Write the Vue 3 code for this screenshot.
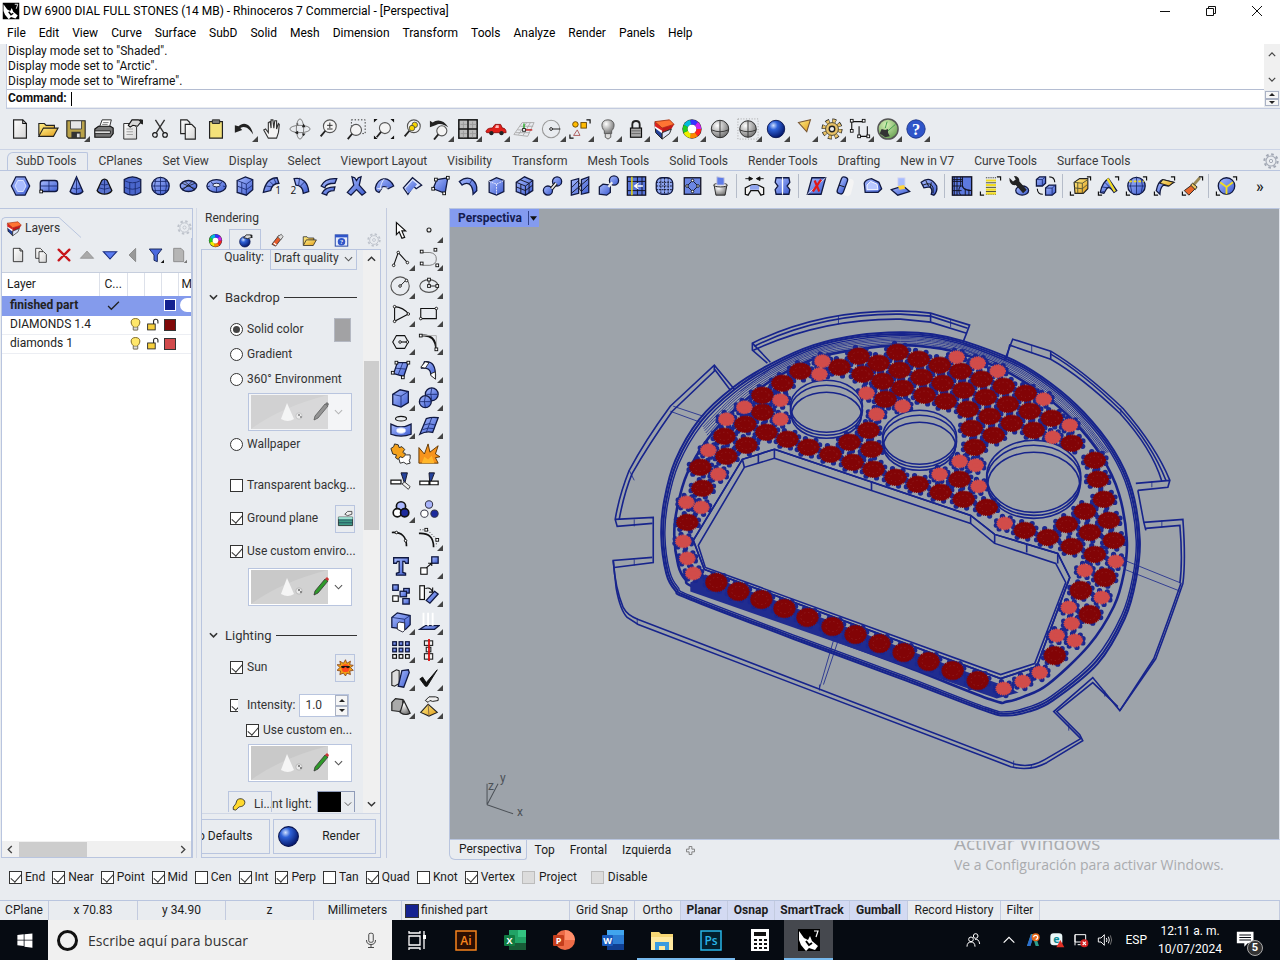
<template>
  <div class="app">
    <svg class="defs" width="0" height="0" aria-hidden="true">
      <defs>
        <linearGradient id="blue" x1="0" y1="0" x2="1" y2="1">
          <stop offset="0" stop-color="#a9bcff" /><stop offset="1" stop-color="#3c5bcf" />
        </linearGradient>
        <linearGradient id="paper" x1="0" y1="0" x2="1" y2="1">
          <stop offset="0" stop-color="#fff" /><stop offset="1" stop-color="#d4d4d4" />
        </linearGradient>
        <linearGradient id="gold" x1="0" y1="0" x2="1" y2="1">
          <stop offset="0" stop-color="#fff08a" /><stop offset="1" stop-color="#e09a18" />
        </linearGradient>
        <radialGradient id="ball" cx=".35" cy=".3" r=".7">
          <stop offset="0" stop-color="#cfe0ff" /><stop offset=".35" stop-color="#2f62d8" /><stop offset="1" stop-color="#061a6e" />
        </radialGradient>
        <radialGradient id="grey" cx=".35" cy=".3" r=".8">
          <stop offset="0" stop-color="#fff" /><stop offset="1" stop-color="#666" />
        </radialGradient>
        <radialGradient id="green" cx=".4" cy=".3" r=".8">
          <stop offset="0" stop-color="#d5f0b5" /><stop offset="1" stop-color="#5f9a4a" />
        </radialGradient>
      </defs>
    </svg>

    <header class="titlebar">
      <svg class="logo" viewBox="0 0 24 24" v-html="icons.rhino"></svg>
      <h1>DW 6900 DIAL FULL STONES (14 MB) - Rhinoceros 7 Commercial - [Perspectiva]</h1>
      <div class="window-buttons">
        <button aria-label="Minimize"><svg viewBox="0 0 12 12"><path d="M1 6.500h10" /></svg></button>
        <button aria-label="Restore"><svg viewBox="0 0 12 12"><path d="M1.500 3.500h7v7h-7zM3.500 3.500v-2h7v7h-2" /></svg></button>
        <button aria-label="Close"><svg viewBox="0 0 12 12"><path d="M1 1l10 10M11 1L1 11" /></svg></button>
      </div>
    </header>

    <nav class="menubar">
      <button v-for="m in menus" :key="m">{{ m }}</button>
    </nav>

    <section class="command">
      <div class="history">
        <p v-for="line in history" :key="line">{{ line }}</p>
      </div>
      <div class="history-scroll">
        <svg viewBox="0 0 10 6"><path d="M1 5l4-4 4 4" /></svg>
        <svg viewBox="0 0 10 6"><path d="M1 1l4 4 4-4" /></svg>
      </div>
      <div class="prompt">
        <label for="cmd">Command:</label>
        <span class="caret"></span>
        <input id="cmd" v-model="command" type="text">
      </div>
      <div class="spin">
        <button aria-label="Previous"><svg viewBox="0 0 8 4"><path d="M0 4l4-4 4 4z" /></svg></button>
        <button aria-label="Next"><svg viewBox="0 0 8 4"><path d="M0 0l4 4 4-4z" /></svg></button>
      </div>
    </section>

    <div class="toolbar">
      <button v-for="t in mainTools" :key="t.id" class="tool" :class="{ more: t.more }" :aria-label="t.id">
        <svg viewBox="0 0 24 24" v-html="icons[t.id]"></svg>
      </button>
    </div>

    <div class="tabs">
      <button v-for="(t, i) in tabs" :key="t" :class="{ active: i === activeTab }" @click="activeTab = i">{{ t }}</button>
      <svg class="gear" viewBox="0 0 24 24" v-html="icons.gear"></svg>
    </div>
    <div class="toolbar subd">
      <template v-for="(t, i) in subdTools" :key="i">
        <span v-if="t === '|'" class="sep"></span>
        <button v-else class="tool" :aria-label="t"><svg viewBox="0 0 24 24" v-html="icons[t]"></svg></button>
      </template>
      <button class="overflow">»</button>
    </div>

    <main class="workspace">
      <aside class="layers">
        <div class="panel-tab">
          <div class="panel-label">
            <svg viewBox="0 0 24 24" v-html="icons.layers"></svg>Layers
          </div>
          <svg class="slant" viewBox="0 0 22 21" preserveAspectRatio="none"><path d="M0 .5L22 20.500" /></svg>
          <svg class="gear" viewBox="0 0 24 24" v-html="icons.gear"></svg>
        </div>
        <div class="layer-frame">
          <div class="layer-tools">
            <button v-for="t in layerTools" :key="t" :aria-label="t"><svg viewBox="0 0 24 24" v-html="icons[t]"></svg></button>
          </div>
          <div class="layer-list">
            <table>
              <colgroup>
                <col class="c-name"><col class="c-cur"><col class="c-s"><col class="c-s"><col class="c-s"><col class="c-m">
              </colgroup>
              <thead>
                <tr><th>Layer</th><th>C...</th><th></th><th></th><th></th><th>M</th></tr>
              </thead>
              <tbody>
                <tr v-for="l in layers" :key="l.name" :class="{ current: l.current }">
                  <td>{{ l.name }}</td>
                  <td><svg v-if="l.current" viewBox="0 0 24 24" v-html="icons.tick"></svg></td>
                  <td><svg v-if="!l.current" viewBox="0 0 24 24" v-html="icons.bulbOn"></svg></td>
                  <td><svg v-if="!l.current" viewBox="0 0 24 24" v-html="icons.unlock"></svg></td>
                  <td><span class="swatch" :style="{ background: l.color }"></span></td>
                  <td><span v-if="l.current" class="material"></span></td>
                </tr>
              </tbody>
            </table>
          </div>
          <div class="hscroll">
            <svg viewBox="0 0 6 10"><path d="M5 1L1 5l4 4" /></svg>
            <span class="thumb"></span>
            <svg viewBox="0 0 6 10"><path d="M1 1l4 4-4 4" /></svg>
          </div>
        </div>
      </aside>

      <aside class="rendering">
        <h2>Rendering</h2>
        <div class="render-tabs">
          <button v-for="(t, i) in renderTabs" :key="t" :class="{ active: i === 1 }" :aria-label="t">
            <svg viewBox="0 0 24 24" v-html="icons[t]"></svg>
          </button>
          <svg class="gear" viewBox="0 0 24 24" v-html="icons.gear"></svg>
        </div>
        <div class="render-frame">
          <div class="render-scroll">
            <div class="render-body">
              <div class="quality">
                <label for="quality">Quality:</label>
                <span class="select">
                  <select id="quality"><option>Draft quality</option></select>
                  <svg class="chev" viewBox="0 0 10 6"><path d="M1 1l4 4 4-4" /></svg>
                </span>
              </div>
              <h3><svg viewBox="0 0 10 6"><path d="M1 1l4 4 4-4" /></svg>Backdrop<i></i></h3>
              <div class="field">
                <label><input v-model="backdrop" type="radio" value="solid">Solid color</label>
                <span class="solid-swatch"></span>
              </div>
              <div class="field"><label><input v-model="backdrop" type="radio" value="gradient">Gradient</label></div>
              <div class="field"><label><input v-model="backdrop" type="radio" value="env">360° Environment</label></div>
              <button class="env off" aria-label="360 environment">
                <svg class="scene" viewBox="0 0 77 34" v-html="icons.scene"></svg>
                <svg class="chev" viewBox="0 0 10 6"><path d="M1 1l4 4 4-4" /></svg>
              </button>
              <div class="field"><label><input v-model="backdrop" type="radio" value="wallpaper">Wallpaper</label></div>
              <div class="field spaced-2"><label><input type="checkbox">Transparent backg...</label></div>
              <div class="field spaced">
                <label><input type="checkbox" checked>Ground plane</label>
                <button class="mini" aria-label="Ground plane settings"><svg viewBox="0 0 24 24" v-html="icons.ground"></svg></button>
              </div>
              <div class="field spaced"><label><input type="checkbox" checked>Use custom enviro...</label></div>
              <button class="env reflect" aria-label="Reflection environment">
                <svg class="scene" viewBox="0 0 77 34" v-html="icons.scene"></svg>
                <svg class="chev" viewBox="0 0 10 6"><path d="M1 1l4 4 4-4" /></svg>
              </button>
              <h3><svg viewBox="0 0 10 6"><path d="M1 1l4 4 4-4" /></svg>Lighting<i></i></h3>
              <div class="field">
                <label><input type="checkbox" checked>Sun</label>
                <button class="mini" aria-label="Sun settings"><svg viewBox="0 0 24 24" v-html="icons.sun"></svg></button>
              </div>
              <div class="field intensity">
                <input class="cut" type="checkbox" checked aria-label="Skylight">
                <label for="intensity">Intensity:</label>
                <span class="number">
                  <input id="intensity" type="text" value="1.0">
                  <span class="steps">
                    <button aria-label="Up"><svg viewBox="0 0 8 4"><path d="M0 4l4-4 4 4z" /></svg></button>
                    <button aria-label="Down"><svg viewBox="0 0 8 4"><path d="M0 0l4 4 4-4z" /></svg></button>
                  </span>
                </span>
              </div>
              <div class="field indent"><label><input type="checkbox" checked>Use custom en...</label></div>
              <button class="env" aria-label="Skylight environment">
                <svg class="scene" viewBox="0 0 77 34" v-html="icons.scene"></svg>
                <svg class="chev" viewBox="0 0 10 6"><path d="M1 1l4 4 4-4" /></svg>
              </button>
              <div class="ambient">
                <button class="lights"><svg viewBox="0 0 24 24" v-html="icons.bulbTilt"></svg>Li...</button>
                <span>nt light:</span>
                <button class="black" aria-label="Ambient color"><i></i><svg class="chev" viewBox="0 0 10 6"><path d="M1 1l4 4 4-4" /></svg></button>
              </div>
            </div>
            <div class="vscroll">
              <svg viewBox="0 0 10 6"><path d="M1 5l4-4 4 4" /></svg>
              <span class="thumb"></span>
              <svg viewBox="0 0 10 6"><path d="M1 1l4 4 4-4" /></svg>
            </div>
          </div>
          <div class="render-foot">
            <button class="defaults"><span>o Defaults</span></button>
            <button class="go"><svg viewBox="0 0 24 24" v-html="icons.ball"></svg><span>Render</span></button>
          </div>
        </div>
      </aside>

      <aside class="toolbox">
        <button v-for="t in sideTools" :key="t.id" class="tool" :class="{ more: t.more }" :aria-label="t.id">
          <svg viewBox="0 0 24 24" v-html="icons[t.id]"></svg>
        </button>
      </aside>

      <section class="view">
        <div class="canvas">
          <svg class="model" viewBox="450 209 828 630" preserveAspectRatio="xMinYMin slice">
            <g class="wire">
              <path v-for="(d, i) in flange" :key="'f' + i" :d="d" />
            </g>
            <g class="wire thin">
              <path v-for="(d, i) in seams" :key="'s' + i" :d="d" />
              <path v-for="(d, i) in arcs" :key="'a' + i" :d="d" />
            </g>
            <g class="wire">
              <path v-for="r in rings" :key="r.t" :d="r.d" :stroke-width="r.w" />
              <path class="pad" d="M690 582L705 574L1000 684L1018 692L996 698L690 591Z" />
              <path class="glass" d="M774 449L970 515L994 534L1057 553L1069 577L1036 666L1000 678L704 569L693 540L742 459Z" />
              <path v-for="(d, i) in screen" :key="'w' + i" :d="d" />
            </g>
            <g class="prongs">
              <template v-for="(g, i) in gems" :key="'p' + i">
                <circle v-for="(p, j) in g.prongs" :key="j" :cx="p[0]" :cy="p[1]" r="2.600" />
              </template>
            </g>
            <g v-for="(h, i) in holes" :key="'h' + i" class="hole">
              <ellipse :cx="h[0]" :cy="h[1] - 9" :rx="h[2] + 1" :ry="h[3] + 3" />
              <ellipse class="line" :cx="h[0]" :cy="h[1] - 5" :rx="h[2] + 1" :ry="h[3] + 2" />
              <ellipse class="line" :cx="h[0]" :cy="h[1]" :rx="h[2]" :ry="h[3]" />
            </g>
            <g v-for="(g, i) in gems" :key="'g' + i" :class="g.kind">
              <ellipse :cx="g.x" :cy="g.y" :rx="g.rx" :ry="g.ry" />
              <ellipse class="facet" :cx="g.x" :cy="g.y" :rx="g.rx - 4" :ry="g.ry - 4" />
            </g>
            <g class="axes">
              <path d="M487 804L513 813M487 804V783M487 804L498 783" />
              <text x="517" y="815">x</text><text x="500" y="781">y</text><text x="488" y="789">z</text>
            </g>
          </svg>
          <button class="view-name">Perspectiva<i><svg viewBox="0 0 8 5"><path d="M0 0l4 5 4-5z" /></svg></i></button>
        </div>
        <div class="view-tabs">
          <button v-for="(v, i) in views" :key="v" :class="{ active: i === 0 }">{{ v }}</button>
          <button aria-label="New view"><svg viewBox="0 0 10 10"><path d="M3.500 .5h3v3h3v3h-3v3h-3v-3h-3v-3h3z" /></svg></button>
        </div>
      </section>
    </main>

    <div class="osnap">
      <label v-for="o in osnaps" :key="o.name" :class="{ wide: o.disabled }">
        <input type="checkbox" :checked="o.on" :disabled="o.disabled">{{ o.name }}
      </label>
    </div>

    <div class="status">
      <span v-for="s in readouts" :key="s">{{ s }}</span>
      <span class="layer-name"><i></i>finished part</span>
      <button v-for="t in toggles" :key="t.name" :class="{ on: t.on }">{{ t.name }}</button>
      <span class="rest"></span>
    </div>

    <footer class="taskbar">
      <button class="start" aria-label="Inicio"><svg viewBox="0 0 24 24" v-html="icons.windows"></svg></button>
      <div class="search">
        <span class="cortana"></span>
        <input type="text" aria-label="Buscar" placeholder="Escribe aquí para buscar">
        <svg viewBox="0 0 24 24" v-html="icons.mic"></svg>
      </div>
      <button v-for="a in apps" :key="a.id" class="app-button" :class="{ open: a.open, active: a.active }" :aria-label="a.id">
        <svg viewBox="0 0 24 24" v-html="icons[a.id]"></svg>
      </button>
      <div class="tray">
        <svg class="people" viewBox="0 0 24 24" v-html="icons.people"></svg>
        <svg v-for="t in tray" :key="t" viewBox="0 0 24 24" v-html="icons[t]"></svg>
        <span class="lang">ESP</span>
        <div class="clock"><span>12:11 a. m.</span><span>10/07/2024</span></div>
        <div class="notes"><svg viewBox="0 0 24 24" v-html="icons.note"></svg><b>5</b></div>
      </div>
    </footer>

    <div class="watermark">
      <p>Activar Windows</p>
      <p>Ve a Configuración para activar Windows.</p>
    </div>
  </div>
</template>

<script setup>
import { ref } from 'vue'

const command = ref('')
const activeTab = ref(0)
const backdrop = ref('solid')

const menus = ['File', 'Edit', 'View', 'Curve', 'Surface', 'SubD', 'Solid', 'Mesh', 'Dimension', 'Transform', 'Tools', 'Analyze', 'Render', 'Panels', 'Help']
const history = ['Display mode set to "Shaded".', 'Display mode set to "Arctic".', 'Display mode set to "Wireframe".']
const tabs = ['SubD Tools', 'CPlanes', 'Set View', 'Display', 'Select', 'Viewport Layout', 'Visibility', 'Transform', 'Mesh Tools', 'Solid Tools', 'Render Tools', 'Drafting', 'New in V7', 'Curve Tools', 'Surface Tools']
const views = ['Perspectiva', 'Top', 'Frontal', 'Izquierda']

// a trailing + marks a tool with a flyout
const tools = (list) => list.split(' ').map((s) => ({ id: s.replace('+', ''), more: s.endsWith('+') }))

const mainTools = tools('new open save+ print props cut copy paste undo+ pan rotate zoom zoomWin zoomExt zoomSel zoomBack+ fourView+ car+ grid+ target+ selectSet+ bulb+ lock+ layers+ wheel+ shade ghost+ ball+ spot+ cog+ dims+ grass+ help+')
const sideTools = tools('arrow point+ polyline+ curve+ circle+ ellipse+ arc+ rect+ polygon+ fillet+ srfPts+ srfBend+ box+ spheres+ pipe+ patch+ puzzle burst trim split group+ ungroup editPts ctrlPts+ text move+ copyObj rotateObj+ boolean+ project+ array+ align+ shear+ check+ solids+ pyramid+')
const subdTools = 'hex plane cone coneCut cyl sphere disc torus box2 loft1 loft2 sweep tri bend bend2 quad strip cube cubeGrid join bridge joinBox insert gridBall diamond bin | stitch mirror | crease pill slab extrude offset | corner lines wrench swap | boxY bendY ballY srfY brush | cubeSel'.split(' ')
const layerTools = ['new', 'copy', 'delete', 'upOff', 'down', 'leftOff', 'filter', 'sheetOff']
const renderTabs = ['wheel', 'renderBall', 'tube', 'open', 'helpWin']
const layers = [
  { name: 'finished part', color: '#152290', current: true },
  { name: 'DIAMONDS 1.4', color: '#800808' },
  { name: 'diamonds 1', color: '#d14a4c' },
]
const osnaps = [
  { name: 'End', on: true }, { name: 'Near', on: true }, { name: 'Point', on: true }, { name: 'Mid', on: true },
  { name: 'Cen' }, { name: 'Int', on: true }, { name: 'Perp', on: true }, { name: 'Tan' }, { name: 'Quad', on: true },
  { name: 'Knot' }, { name: 'Vertex', on: true }, { name: 'Project', disabled: true }, { name: 'Disable', disabled: true },
]
const readouts = ['CPlane', 'x 70.83', 'y 34.90', 'z', 'Millimeters']
const toggles = [
  { name: 'Grid Snap' }, { name: 'Ortho' }, { name: 'Planar', on: true }, { name: 'Osnap', on: true },
  { name: 'SmartTrack', on: true }, { name: 'Gumball', on: true }, { name: 'Record History' }, { name: 'Filter' },
]
const apps = [
  { id: 'taskview' }, { id: 'illustrator' }, { id: 'excel' }, { id: 'powerpoint' }, { id: 'word' },
  { id: 'explorer', open: true }, { id: 'photoshop', open: true }, { id: 'calc' }, { id: 'rhino', open: true, active: true },
]
const tray = ['chevUp', 'autodesk', 'eset', 'network', 'volume']

// ---- icons, all on a 24 unit grid ----
const k = 'fill="none" stroke="#111" stroke-width="1.2"'
const b = 'fill="url(#blue)" stroke="#101840" stroke-width="1.4"'
const y = 'fill="url(#gold)" stroke="#222" stroke-width="1.2"'
const n = 'fill="none" stroke="#17286f" stroke-width=".9"'
const dot = (...pts) => pts.map(([px, py]) => `<rect x="${px - 1.5}" y="${py - 1.5}" width="3" height="3" fill="#fff" stroke="#111"/>`).join('')
const ends = (...pts) => pts.map(([px, py]) => `<circle cx="${px}" cy="${py}" r="1.4" fill="#fff" stroke="#111"/>`).join('')
const hues = ['#f22', '#f80', '#ee0', '#2c2', '#0bd', '#33f', '#c2e']
const wheel = '<circle cx="12" cy="12" r="10.600" fill="#333"/><circle cx="12" cy="12" r="5" fill="#fff"/>' + hues.map((c, i) => `<circle cx="12" cy="12" r="7.500" fill="none" stroke="${c}" stroke-width="5" stroke-dasharray="6.9 40.3" stroke-dashoffset="${-i * 6.73}"/>`).join('')
const lens = (cx, cy, r) => `<circle cx="${cx}" cy="${cy}" r="${r}" fill="#f4f4f4" stroke="#555" stroke-width="1.2"/><path d="M${cx - r * 0.7} ${cy + r * 0.7}L${cx - r - 3} ${cy + r + 4}" stroke="#222" stroke-width="2"/>`
const corners = '<path d="M19 2h4v4M5 22H1v-4" fill="none" stroke="#111" stroke-width="1.3"/>'
const office = (color, letter, shape) => `${shape}<rect x="1" y="7" width="11" height="11" rx="1" fill="${color}"/><text x="6.500" y="16" text-anchor="middle" font-size="9" font-weight="700" fill="#fff" font-family="Open Sans, sans-serif">${letter}</text>`
const cubeAt = (x0, y0, s) => `<path d="M${x0} ${y0 + s * 0.3}l${s * 0.35} -${s * 0.3}h${s * 0.65}v${s * 0.7}l-${s * 0.35} ${s * 0.3}h-${s * 0.65}z" ${b}/><path d="M${x0} ${y0 + s * 0.3}h${s * 0.65}v${s * 0.7}m0-${s * 0.7}l${s * 0.35}-${s * 0.3}" ${n}/>`

const icons = {
  rhino: '<rect x="1" y="1" width="22" height="22" fill="#000"/><path d="M2 3l5 7 4 2 2-4 2 5 6 5-3 4-6-2-3 3-5-6-2-5z" fill="#fff"/><path d="M9 13l3 4 3-2" stroke="#000" fill="none" stroke-width="2"/><path d="M17 3h4l-2 6" fill="none" stroke="#fff" stroke-width="1.2"/>',
  gear: '<g fill="none" stroke="#a2a8b4"><circle cx="12" cy="12" r="7.500" stroke-width="1.6"/><circle cx="12" cy="12" r="10" stroke-width="3" stroke-dasharray="3.9 3.95"/><circle cx="12" cy="12" r="2.500" stroke-width="1.4"/></g>',
  new: `<path d="M5 2h10l4 4v16H5z" fill="url(#paper)" stroke="#222" stroke-width="1.3"/><path d="M15 2v4h4" ${k}/>`,
  copy: '<path d="M4 2h7l3 3v12H4z" fill="url(#paper)" stroke="#222" stroke-width="1.2"/><path d="M9 7h7l4 4v12H9z" fill="url(#paper)" stroke="#222" stroke-width="1.2"/>',
  open: `<path d="M2 19V6h6l2 2h9v4" ${y}/><path d="M2 20l5-9h16l-5 9z" ${y}/>`,
  save: '<path d="M2 3h20v19H4l-2-2z" fill="#b9a24a" stroke="#222" stroke-width="1.2"/><path d="M6 3h12v9H6z" fill="#e6e6e6" stroke="#444"/><path d="M7 15h10v7H7z" fill="#333"/><path d="M13 17h3v4h-3z" fill="#ddd"/>',
  print: '<path d="M7 10l3-8h10l-2 8z" fill="#fff" stroke="#222"/><path d="M2 12l4-3h13l3 2v6l-3 4H2z" fill="#777" stroke="#111" stroke-width="1.3"/><path d="M2 14h17v3H2z" fill="#ddd" stroke="#222"/><path d="M11 5h6M10 7h6" stroke="#777"/>',
  props: `<path d="M3 6h10l4 4v13H3z" fill="url(#paper)" stroke="#222"/><path d="M6 12h7M6 15h7M6 18h7" stroke="#999"/><path d="M8 8l4-6h7l3 2-4 5-5-1-3 2z" fill="#d8d8d8" stroke="#111" stroke-width="1.2"/><path d="M20 1l4 1v5l-3-1z" fill="#222"/>`,
  cut: `<path d="M7 2l9 14M17 2L8 16" stroke="#333" stroke-width="1.500"/><circle cx="6.500" cy="18.500" r="2.500" ${k}/><circle cx="17.500" cy="18.500" r="2.500" ${k}/>`,
  paste: '<path d="M5 4h14v18H5z" fill="#f4e27a" stroke="#222" stroke-width="1.300"/><path d="M8 2h8v4H8z" fill="#777" stroke="#222"/>',
  undo: '<path d="M2 8v8l8-3-2-2c5-3 9 0 14 7-2-11-10-15-16-9z" fill="#222"/>',
  pan: '<path d="M8 22l-5-9 2-1 3 4V5l2-1 1 7V2h2l1 9 1-8h2l0 9 2-6 1 1-1 9-2 6z" fill="#f3f3f3" stroke="#333" stroke-width="1.200"/>',
  rotate: '<ellipse cx="12" cy="12" rx="11" ry="4" fill="none" stroke="#777"/><ellipse cx="12" cy="12" rx="4" ry="11" fill="none" stroke="#777"/><path d="M14 10l2-4 2 4zM14 17l2 3 2-3zM10 14l-4 2 4 2zM8 6h2v2zM12 7v4" fill="#222"/>',
  zoom: lens(14, 9, 7) + '<path d="M11 8h6M14 5v6M11 12h6" stroke="#222"/>',
  zoomWin: '<rect x="7" y="2" width="15" height="15" fill="none" stroke="#222" stroke-dasharray="1.500 2"/>' + lens(12, 13, 6),
  zoomExt: lens(13, 11, 6) + '<path d="M1 5V1h4zM19 1h4v4zM1 19v4h4zM23 19v4h-4z" fill="#111"/>',
  zoomSel: lens(14, 9, 7) + '<circle cx="15" cy="7.500" r="3" fill="#f6d400" stroke="#554"/><circle cx="12" cy="11" r="3" fill="#f6d400" stroke="#554"/>',
  zoomBack: lens(14, 14, 5.5) + '<path d="M1 3v7l6-2c5-3 9-1 14 2C16 2 9 1 4 5z" fill="#222"/>',
  fourView: '<rect x="2" y="2" width="20" height="20" fill="#bbb" stroke="#111" stroke-width="1.600"/><path d="M4 7h7M14 7h7M4 17h7M14 17h7M7 4v7M17 4v7M7 14v7M17 14v7" stroke="#999"/><path d="M12 2v20M2 12h20" stroke="#111" stroke-width="1.600"/>',
  car: '<path d="M1 15c1-4 5-4 7-4l3-4h6l2 4c3 0 4 2 4 5H2z" fill="#e0201a" stroke="#901010"/><circle cx="7" cy="16.500" r="2.300" fill="#222"/><circle cx="18" cy="16.500" r="2.300" fill="#222"/><path d="M12 8h3v3h-4z" fill="#fbb"/>',
  grid: '<path d="M1 18L10 5h13L16 20zM5 13h15M3 16h15M8 9h14M6 18l9-13M11 19l8-14" fill="none" stroke="#aaa"/><path d="M12 13h9" stroke="#c22" stroke-width="1.500"/><path d="M12 13V6" stroke="#2a2" stroke-width="1.500"/><rect x="10.500" y="11.500" width="3" height="3" fill="#fff" stroke="#222"/>',
  target: '<circle cx="11" cy="12" r="9.500" fill="none" stroke="#999" stroke-width="1.200"/><path d="M12 12h9" stroke="#111"/><circle cx="11" cy="12" r="1.500" fill="#fff" stroke="#111"/>',
  selectSet: '<circle cx="7" cy="7" r="3" fill="#fb0" stroke="#640"/><rect x="13" y="5" width="6" height="6" fill="#fb0" stroke="#640"/><path d="M5 19l4-6 3 6z" fill="none" stroke="#a55"/>' + corners,
  bulb: '<path d="M12 2c-8 0-8 8-4 12v3h8v-3c4-4 4-12-4-12z" fill="url(#grey)" stroke="#555"/><path d="M9 17h6v4l-3 2-3-2z" fill="#ddd" stroke="#555"/>',
  lock: '<path d="M8 11V7c0-5 8-5 8 0v4" fill="none" stroke="#222" stroke-width="2"/><rect x="6" y="11" width="12" height="10" fill="#aaa" stroke="#111" stroke-width="1.300"/><path d="M7 14h10M7 17h10" stroke="#666"/>',
  layers: '<path d="M2 5l8 5v13l-7-7z" fill="#25429c" stroke="#111"/><path d="M2 5l8 5v7L2 11z" fill="#fff"/><path d="M2 4l8 5v5L2 9z" fill="#d22"/><path d="M2 4l16-2 5 5-13 4z" fill="#ff7433" stroke="#a31"/><path d="M10 11l13-4-3 5-10 4z" fill="#c31a18"/><path d="M10 16l10-4-2 5-8 6z" fill="#dfe6f8" stroke="#222"/>',
  wheel,
  shade: '<circle cx="12" cy="12" r="9.500" fill="url(#grey)" stroke="#222"/><path d="M12 3v18M3 13q9 4 18 0" fill="none" stroke="#333"/>',
  ghost: '<rect x="1" y="1" width="22" height="22" fill="none" stroke="#999" stroke-dasharray="1 2"/><circle cx="12" cy="12" r="9" fill="url(#grey)" stroke="#222"/><path d="M12 3v18M3 13q9 4 18 0" fill="none" stroke="#333"/>',
  ball: '<circle cx="12" cy="12" r="9.500" fill="url(#ball)" stroke="#0a154f"/>',
  spot: '<path d="M6 5l13-3-4 13z" fill="url(#gold)" stroke="#753" stroke-width="1.200"/>',
  cog: '<circle cx="12" cy="12" r="8.500" fill="none" stroke="#222" stroke-width="6" stroke-dasharray="3.800 2.880"/><circle cx="12" cy="12" r="8.500" fill="none" stroke="#e8c267" stroke-width="4.200" stroke-dasharray="3 3.680" stroke-dashoffset="-.4"/><circle cx="12" cy="12" r="7" fill="#e8c267" stroke="#443"/><circle cx="12" cy="12" r="3" fill="#eee" stroke="#222" stroke-width="1.500"/>',
  dims: `<path d="M3 4h13M3 4v10M11 20h9M20 9v11M11 9v11" ${k}/>` + dot([3, 3], [16, 3], [11, 20], [3, 14], [21, 20]),
  grass: '<circle cx="12" cy="12" r="11" fill="url(#green)" stroke="#555" stroke-width="1.600"/><path d="M12 14l8-7M9 11l2-7" stroke="#394"/><path d="M3 17l2-5 4 1 3-1v4l2 4-5 1z" fill="#333"/>',
  help: '<circle cx="12" cy="12" r="10" fill="#2f55c9" stroke="#1b3488"/><text x="12" y="18" text-anchor="middle" font-size="18" font-weight="700" fill="#fff" font-family="Liberation Serif, serif">?</text>',

  hex: `<path d="M7 2h10l5 10-5 10H7L2 12z" ${b}/><path d="M9 6h6l3 6-3 6H9l-3-6z" fill="#a9bcff" stroke="#dfe8ff"/>`,
  plane: `<rect x="3" y="6" width="19" height="12" rx="3" ${b}/><path d="M12.500 6v12M3 12h19" ${n}/>` + dot([4, 18]),
  cone: `<path d="M12 2l7 16c-3 4-11 4-14 0z" ${b}/><path d="M12 2v19M7 14q5 3 10 0" ${n}/>`,
  coneCut: `<path d="M9 6q3-3 6 0l5 11c-3 5-13 5-16 0z" fill="#5b74cf" stroke="#111" stroke-width="1.400"/><path d="M12 5v16M6 14q6 3 12 0M8 10q4 2 8 0" ${n}/>`,
  cyl: `<path d="M3 5q9-6 18 0v14q-9 6-18 0z" fill="#4a66cc" stroke="#101840" stroke-width="1.400"/><path d="M3 6q9 5 18 0M3 13q9 5 18 0M9 8v14M15 8v14" ${n}/>`,
  sphere: `<circle cx="12" cy="12" r="9.500" ${b}/><path d="M12 2v20M3 12h18M5 7h14M5 17h14M7 4q-3 8 0 16M17 4q3 8 0 16" ${n}/>`,
  disc: `<ellipse cx="12" cy="12" rx="9" ry="6" ${b}/><path d="M5 9l14 6M5 15l14-6M8 7l10 9M6 16L16 7" stroke="#111" stroke-width=".8"/>`,
  torus: `<ellipse cx="12" cy="12" rx="10.500" ry="7" ${b}/><ellipse cx="12" cy="11" rx="4" ry="2" fill="#e9ecf1" stroke="#101840"/><path d="M12 13v6M5 12l-3 1M19 12l3 1M6 8l3 2M18 8l-3 2" ${n}/>`,
  box2: `<path d="M4 6l9-4 8 3v11l-7 6-10-3z" ${b}/><path d="M4 6l10 4 7-5M14 10v12M9 8v12M4 12l10 4 7-5" ${n}/>`,
  loft1: `<path d="M2 19C4 9 9 3 17 3l2 6c-5 0-8 3-9 8z" ${b}/><path d="M5 12l7 1M9 7l4 4M13 3l3 6" ${n}/><text x="15" y="21" font-size="11" fill="#111" font-family="Open Sans, sans-serif">1</text>`,
  loft2: `<path d="M5 4c9-2 15 4 16 14l-6 2c0-5-3-9-8-9z" ${b}/><path d="M11 3l-1 8M17 7l-5 5" ${n}/><text x="1" y="21" font-size="11" fill="#111" font-family="Open Sans, sans-serif">2</text>`,
  sweep: `<path d="M4 12q4-9 17-8l-2 5q-10 0-11 5zM5 20q3-7 14-7l-1 4q-7 0-8 5z" ${b}/>`,
  tri: `<path d="M7 2l3 1 2 3 2-3 3-1-2 9 7 8-4 3-6-6-6 6-4-3 7-8z" ${b}/>`,
  bend: `<path d="M2 14q2-9 10-10 7 1 10 8l-6 3q-3-3-6-2l-4 6q-4-1-4-5z" ${b}/><path d="M12 4q-4 4-5 13M4 15q5-1 12-1" stroke="#e8eeff" fill="none"/>`,
  bend2: `<path d="M2 14L12 3l10 8-6 4-3-3-6 9z" fill="#dde5ff" stroke="#101840" stroke-width="1.400"/><path d="M4 15L12 6l5 4-9 10z" fill="url(#blue)"/>`,
  quad: `<path d="M8 5l12-2-3 17-13-5z" ${b}/>` + dot([7, 5], [20, 3], [4, 15], [16, 20]),
  strip: `<path d="M2 7q8-6 14-2 6 5 5 12l-4 4q0-8-4-11-4-2-8 1z" ${b}/><path d="M2 7l3 4M16 5l-3 5M21 17l-4 4" ${n}/>`,
  cube: `<path d="M4 7l8-4 8 3v12l-8 4-8-3z" ${b}/><path d="M4 7l8 3 8-4M12 10v12" stroke="#eef" fill="none" stroke-dasharray="2 1"/>`,
  cubeGrid: `<path d="M3 8l9-6 9 4v11l-8 5-10-4z" ${b}/><path d="M3 8l10 4 8-6M13 12v10M3 13l10 4 8-6M8 10v10M7 5l10 4v11" stroke="#112" fill="none"/>`,
  join: `<circle cx="17" cy="7" r="5" ${b}/><circle cx="7" cy="17" r="5" ${b}/><path d="M11 15l5-6" stroke="#111" stroke-width="4"/><path d="M11 15l5-6" stroke="#eee" stroke-width="2"/>`,
  bridge: `<path d="M2 6l8-2v16l-8 2zM13 5l8-3v17l-8 2z" ${b}/><path d="M2 14l8-8M2 20l19-16M13 18l8-8M10 8l3 3-3 3 3 4" stroke="#112" fill="none"/>`,
  joinBox: `<circle cx="18" cy="6" r="5" ${b}/><path d="M2 13l4-3 8 1v8l-4 3-8-1z" ${b}/><path d="M12 13l4-5" stroke="#eee" stroke-width="2.500"/>`,
  insert: '<rect x="2" y="2" width="20" height="20" fill="#5673d8" stroke="#112" stroke-width="1.400"/><path d="M2 7h20M2 17h20M13 2v20M18 2v20" stroke="#112"/><path d="M7 2v20" stroke="#f4e000" stroke-width="1.500"/><path d="M19 12h-8M14 9l-4 3 4 3" stroke="#fff" fill="none" stroke-width="1.500"/>',
  gridBall: '<rect x="3" y="3" width="18" height="18" rx="6" fill="#8ea6f4" stroke="#101840" stroke-width="1.400"/><path d="M3 8h18M3 12h18M3 16h18M8 3v18M12 3v18M16 3v18" stroke="#112" stroke-dasharray="2 1"/>',
  diamond: '<rect x="3" y="3" width="18" height="18" fill="#6b86e4" stroke="#112" stroke-width="1.400"/><path d="M12 6l6 6-6 6-6-6z" fill="none" stroke="#112"/>' + ends([12, 6], [18, 12], [12, 18], [6, 12]),
  bin: '<path d="M5 11h14l-2 11H7z" fill="url(#grey)" stroke="#222"/><ellipse cx="12" cy="11" rx="7.500" ry="2" fill="#eee" stroke="#222"/><path d="M8 2l8 1v8H8z" fill="#5f7ce8" stroke="#ccd"/>',
  stitch: '<path d="M2 4h7M6 2l4 2-4 2zM22 4h-7M18 2l-4 2 4 2z" stroke="#111" fill="#111"/><path d="M6 12q6-3 12 0l4 2v7l-3 1-3-5H8l-3 5-3-1v-7z" fill="#f2f2f2" stroke="#111" stroke-width="1.400"/><path d="M7 12q5-2 10 0v4H7z" fill="#90a5f0"/>',
  mirror: `<path d="M5 3h6l1 2 1-2h6l1 5-3 4 3 4-1 5h-6l-1-2-1 2H5l-1-5 3-4-3-4z" ${b}/><path d="M12 3v18" stroke="#fff" stroke-width="1.500"/>`,
  crease: `<path d="M7 3h15l-5 18H2z" ${b}/><path d="M2 21L22 3" stroke="#dde"/><path d="M10 6l5 12M17 5L8 18" stroke="#e01818" stroke-width="2.400"/>`,
  pill: '<rect x="9" y="3" width="12" height="19" rx="4" fill="#f4f4f4" transform="rotate(14 12 12)"/>' + `<rect x="6" y="2" width="7" height="19" rx="3" transform="rotate(20 10 12)" ${b}/><path d="M6 11l6 2" stroke="#111"/>`,
  slab: `<path d="M3 9q1-4 8-5l8 4 3 7-4 4H4z" ${b}/><path d="M6 11l4-4 7 3 1 6H6z" fill="#b8c8ff" stroke="#fff"/>`,
  extrude: `<path d="M2 16l13-4 7 6-13 4z" ${b}/><path d="M9 3h8v9l-6 2-2-2z" fill="#a8bcff" stroke="#dde"/><path d="M9 12l7-1 1 4-6 1z" fill="#ffd43a"/>`,
  offset: `<path d="M4 8q10-8 17 4 1 6-3 10l-3-1q2-6-2-8l-6 1z" ${b}/><path d="M6 11q9-4 11 3v6M9 6l3 6M15 8l-1 6" stroke="#111" fill="none"/>`,
  corner: '<rect x="1" y="2" width="21" height="20" fill="#5d7ae0" stroke="#112" stroke-width="1.500"/><path d="M1 7h11M1 12h11M12 12q0 5 10 5M6 2v20M12 2v10q1 4 10 5M10 2v10q-4 4 0 10M1 17h10M3 2v20M1 5h11M15 15v7M19 16v6" stroke="#112" fill="none"/>',
  lines: '<path d="M7 3h11M7 21h11" stroke="#111" stroke-dasharray="1 1"/><path d="M7 6h11M7 11h11M7 16h11M7 20h11" stroke="#f2dc20" stroke-width="2.400"/><path d="M7 8.500h11M7 13.500h11M7 18h11" stroke="#443"/>' + corners,
  wrench: `<ellipse cx="16" cy="17" rx="7" ry="5" ${b}/><path d="M2 3l4 4 3-2-2-4q6 0 6 6l8 9-4 4-8-9Q2 12 2 3z" fill="#222"/>`,
  swap: cubeAt(1, 2, 10) + cubeAt(11, 11, 11) + `<path d="M15 2q6 0 6 6M2 15q0 6 6 6" ${k}/>`,
  boxY: `<path d="M5 8l6-4h9v11l-5 5H6z" ${y}/><path d="M5 8l9 1 6-4M14 9v11M9 8v12M5 14l9 1 6-5" stroke="#553" fill="none"/>` + corners,
  bendY: `<path d="M3 19q2-11 9-15l9 13-3 2q-5-8-8-4l-3 5z" ${b}/><path d="M3 19l4-1M5 13l6 1M8 8l6 6" ${n}/><path d="M11 4l8 14" stroke="#f2dc20" stroke-width="2.500"/>` + corners,
  ballY: `<circle cx="12" cy="12" r="9.500" ${b}/><path d="M12 2v20M3 12h18M7 4q-3 8 0 16M17 4q3 8 0 16" ${n}/><path d="M4 7h16" stroke="#f2dc20" stroke-width="2" stroke-dasharray="3 2"/>` + corners,
  srfY: `<path d="M3 17Q5 7 10 5l12 3q-4 2-6 4l-5-1q-4 3-4 10z" ${b}/><path d="M10 5l12 3-5 4-10-3z" ${y}/>` + corners,
  brush: '<path d="M20 3l-8 9" stroke="#985" stroke-width="3"/><path d="M3 17l8-6 4 4-7 7z" fill="#e8662a" stroke="#222"/><path d="M10 11l2-2 5 4-2 3z" fill="#f0c860" stroke="#222"/>' + corners,
  cubeSel: `<circle cx="12" cy="12" r="9" ${b}/><path d="M12 13v8M12 13L5 8M12 13l7-5" stroke="#f2dc20" stroke-width="2"/>` + corners,

  arrow: '<path d="M7 4v13l3-3 3 7 3-1-3-7h4z" fill="#fff" stroke="#111" stroke-width="1.300"/>',
  point: '<circle cx="12" cy="12" r="2.200" fill="#eee" stroke="#222" stroke-width="1.200"/>',
  polyline: `<path d="M4 20L9 6l10 11" ${k}/>` + ends([4, 20], [9, 6], [19, 17]),
  curve: `<path d="M5 6h8q7 1 7 7 0 6-7 7H5" fill="none" stroke="#777"/>` + dot([4, 5], [19, 3], [4, 18], [21, 20]),
  circle: '<circle cx="11" cy="12" r="10" fill="none" stroke="#555" stroke-width="1.200"/><path d="M11 12l6-6" stroke="#111"/>' + ends([11, 12], [18, 6]),
  ellipse: '<ellipse cx="12" cy="12" rx="10" ry="7" fill="none" stroke="#555" stroke-width="1.200"/><path d="M12 5v7h8" fill="none" stroke="#111"/>' + dot([12, 5], [12, 12], [21, 12]),
  arc: `<path d="M5 20V4q10 1 15 8z" ${k}/>` + ends([5, 4], [20, 12], [5, 20]),
  rect: `<path d="M3 6h17v11H3z" ${k}/>` + ends([3, 17], [20, 6]),
  polygon: `<path d="M7 5h9l4 7-4 7H7l-4-7z" ${k}/><path d="M11 12h8" ${k}/>` + ends([11, 12], [19, 12]),
  fillet: '<path d="M4 5q15-2 16 16" fill="none" stroke="#111" stroke-width="2.200"/><path d="M4 5h16v16" fill="none" stroke="#aaa"/>' + dot([3, 5], [20, 20]),
  srfPts: `<path d="M8 4h12l-5 15-11-3z" ${b}/><path d="M14 4L9 17M6 10l11 1" ${n}/>` + dot([7, 4], [20, 4], [3, 15], [14, 20]),
  srfBend: `<path d="M7 3q13-2 12 18l-5-4q0-8-10-7z" ${b}/><path d="M3 9l5-6 4 1-4 6zM14 16l5-2v8l-5-4z" fill="#fff" stroke="#222"/>`,
  box: `<path d="M3 8l8-5 9 2v12l-8 5-9-3z" ${b}/><path d="M3 8l9 2 8-5M12 10v12" ${n}/>`,
  spheres: `<circle cx="15" cy="8" r="7" ${b}/><circle cx="8" cy="16" r="6.500" ${b}/><path d="M2 16h12M9 8h12M8 10q-2 6 0 12M15 1q-2 6 0 14" ${n}/>`,
  pipe: `<ellipse cx="12" cy="4" rx="6" ry="2.500" ${k}/><path d="M1 10q11 6 22 0v11q-11 4-22 0z" ${b}/><ellipse cx="12" cy="17" rx="5" ry="3" fill="#fff" stroke="#bcf"/>`,
  patch: `<path d="M9 4q6-2 13-1l-6 16q-7-2-14 2z" ${b}/><path d="M15 3L9 19M6 11q6-3 13 0M5 16q6-3 13-1" ${n}/>`,
  puzzle: '<path d="M12 13l4-2 2 2 4 0v4l-1 2 1 3-4 1-3-2-4 1-1-4-2-2z" fill="#fff" stroke="#222"/><path d="M1 6l3-2 1-3 4 1 1 3 3-1 3 3-2 3 3 3-3 3-3-1-2 3-3-2 1-3-4-1z" fill="#f5a21c" stroke="#222"/>',
  burst: '<path d="M1 22V5l6 7L11 1l2 9 9-7-3 9 5 3-5 1 3 6z" fill="#f7941d" stroke="#5a3200"/><path d="M4 22l3-7 4 3 4-4 3 8z" fill="#ffb62a"/>',
  trim: '<path d="M12 2h7l-3 12z" fill="#25429c" stroke="#112"/><path d="M1 10h11v4H1z" fill="#fff" stroke="#111" stroke-width="1.300"/><path d="M13 14l7 6 2-3-6-5z" fill="#eee" stroke="#333"/>',
  split: '<path d="M12 2h6l-5 13z" fill="#25429c" stroke="#112"/><path d="M2 11h10v4H2zM13 11h9v4h-9z" fill="#fff" stroke="#111" stroke-width="1.300"/>',
  group: '<g stroke="#111" stroke-width="1.800"><circle cx="12" cy="8" r="5" fill="#aab8ff"/><circle cx="8" cy="15" r="4.500" fill="#fff"/><circle cx="16" cy="15" r="4.500" fill="#1c2a9c"/></g>',
  ungroup: '<g stroke="#334" stroke-width="1.100"><circle cx="12" cy="6" r="4" fill="#a8b4fb"/><circle cx="7" cy="16" r="4" fill="#fff"/><circle cx="18" cy="16" r="4" fill="#1c2a9c"/></g>',
  editPts: '<path d="M2 6q16-1 16 15" fill="none" stroke="#111" stroke-width="1.800"/>' + ends([7, 6], [17, 15]),
  ctrlPts: '<path d="M1 7q16-1 16 15" fill="none" stroke="#111" stroke-width="1.800"/><path d="M2 3h8l10 10v8" fill="none" stroke="#111" stroke-dasharray="1 2"/>' + dot([9, 3], [21, 14]),
  text: `<path d="M4 3h16v6h-3l-1-2h-2v12l3 1v2H7v-2l3-1V7H8L7 9H4z" ${b}/>`,
  move: `<rect x="3" y="14" width="7" height="7" fill="#fff" stroke="#111" stroke-width="1.200"/><rect x="15" y="2" width="7" height="7" ${b}/><path d="M9 14l6-5m-4 0h4v3" ${k}/>`,
  copyObj: `<rect x="3" y="2" width="6" height="6" ${b}/><rect x="15" y="6" width="6" height="5" ${b}/><rect x="11" y="9" width="7" height="6" ${b}/><rect x="3" y="14" width="6" height="6" fill="#fff" stroke="#111" stroke-width="1.200"/><rect x="14" y="17" width="7" height="6" ${b}/>`,
  rotateObj: `<rect x="2" y="3" width="5" height="15" fill="#fff" stroke="#111" stroke-width="1.300"/><path d="M18 9l4 3-9 10-4-3z" ${b}/><path d="M8 6q6-2 8 4m0-5v5h-4" ${k}/>`,
  boolean: `<path d="M2 7l6-5 14 3v10l-5 5-15-2z" ${b}/><path d="M2 7l14 2 6-4M16 9v11" ${n}/><path d="M8 20v-6l2-2 6 1v8l-2 2z" fill="#fff" stroke="#223"/>`,
  project: `<path d="M2 20l6-4h15l-5 4z" ${b}/><path d="M6 2v14M11 2v14M16 2v14" stroke="#fff" stroke-width="2"/>`,
  array: [3, 10, 17].flatMap((px) => [3, 10, 17].map((py) => `<rect x="${px}" y="${py}" width="4" height="4" ${py === 17 ? 'fill="#fff" stroke="#111" stroke-width="1.300"' : b}/>`)).join(''),
  align: '<g fill="#eee" stroke="#222" stroke-width="1.200"><rect x="7" y="2" width="9" height="5"/><rect x="9" y="9" width="5" height="5"/><rect x="7" y="16" width="9" height="6"/></g><path d="M12 0v24" stroke="#d11" stroke-width="2"/>',
  shear: `<path d="M2 6l5-3 3 1v14l-5 3-3-1z" fill="#ddd" stroke="#222" stroke-width="1.200"/><path d="M13 4l7-1 1 3-6 16-6-1z" ${b}/>`,
  check: '<path d="M2 13l3-2 4 6L21 3 10 21H8z" fill="#111" stroke="#111"/>',
  solids: '<path d="M2 8l4-4 8 1v11l-4 2-8-1z" fill="#aaa" stroke="#222" stroke-width="1.300"/><path d="M15 6l7 14q-5 3-11-1z" fill="url(#grey)" stroke="#222" stroke-width="1.300"/>',
  pyramid: `<path d="M11 10l10 9-9 4-9-4z" ${y}/><path d="M11 10l1 13" stroke="#864"/><path d="M8 6l4-4h7l3 1v3l-6 1-3-1-2 2z" fill="#eee" stroke="#111"/>`,

  delete: '<path d="M4 4l16 16M20 4L4 20" stroke="#c8141a" stroke-width="3.500" stroke-linecap="round"/>',
  upOff: '<path d="M2 17L12 6l10 11z" fill="#aaa" stroke="#888"/>',
  down: '<path d="M2 7h20L12 18z" fill="#5b7df2" stroke="#1c2f80" stroke-width="1.600"/>',
  leftOff: '<path d="M16 2v20L6 12z" fill="#999" stroke="#777"/>',
  filter: '<path d="M2 3h19l-7 9v10l-5-2v-8z" fill="#4b6be0" stroke="#142255" stroke-width="1.400"/><path d="M24 19v5h-5z" fill="#111"/>',
  sheetOff: '<path d="M4 2h11l4 4v16H4z" fill="#b5b5b5" stroke="#888" stroke-width="1.300"/><path d="M24 19v5h-5z" fill="#777"/>',
  tick: '<path d="M2 13l6 6L22 5" fill="none" stroke="#222" stroke-width="2.400"/>',
  bulbOn: '<path d="M12 1C1 1 3 12 8 16v6h8v-6c5-4 7-15-4-15z" fill="#ffe76a" stroke="#6b5510" stroke-width="1.600"/><path d="M8 17h8v5H8z" fill="#ddd" stroke="#555"/>',
  bulbTilt: '<path d="M8 5c5-5 15-1 12 6-2 5-7 4-9 5l-5 5-4-1 0-4 4-5z" fill="#ffd92e" stroke="#222" stroke-width="1.300"/>',
  unlock: '<rect x="3" y="11" width="14" height="11" fill="#f6cf3c" stroke="#222" stroke-width="1.600"/><path d="M14 11V6c0-5 8-5 8 0v4" fill="none" stroke="#222" stroke-width="2"/>',
  renderBall: '<circle cx="11" cy="14" r="8.500" fill="url(#ball)" stroke="#0a154f"/><path d="M9 8l4-5h7l2 4-7 2-3-1z" fill="#ddd" stroke="#111" stroke-width="1.300"/><path d="M20 2l3 1v5h-2z" fill="#222"/>',
  tube: '<path d="M3 18L14 4l5 4L9 21z" fill="#e85a28" stroke="#333" stroke-width="1.300"/><path d="M12 6l5 5 4-5-3-4z" fill="#ddd" stroke="#333"/><path d="M6 16l4 3" stroke="#fff" stroke-width="2"/>',
  helpWin: '<rect x="2" y="3" width="20" height="18" fill="#e6ecfb" stroke="#2a4aa8" stroke-width="1.600"/><path d="M2 3h20v4H2z" fill="#2f55c9"/><circle cx="12" cy="14" r="6" fill="#2f55c9"/><text x="12" y="18" text-anchor="middle" font-size="10" font-weight="700" fill="#fff" font-family="Liberation Serif, serif">?</text>',
  ground: '<path d="M2 10h20v12H2z" fill="#3f9a86" stroke="#111"/><path d="M2 18h20M2 14h20" stroke="#124" stroke-width=".8"/><path d="M2 10h20v3H2z" fill="#9fe0d2"/><path d="M11 6l4-4h6v4l-6 2z" fill="#eee" stroke="#222"/>',
  sun: '<path d="M12 1l2 5 5-3-1 5 5 1-4 3 4 4-5 1 1 5-5-2-2 4-3-4-5 2 1-5-5-1 4-4-4-4 5 0-1-5 5 3z" fill="#f0a018" stroke="#7a3008"/><circle cx="12" cy="13" r="5.500" fill="#ff4a1c"/><path d="M6 10h12v2l-3 1-3-2-3 2-3-1z" fill="#111"/>',
  scene: '<rect width="77" height="34" fill="#c9c9c9"/><path d="M0 34Q30 12 77 0v34z" fill="#d2d2d2"/><path d="M36 8l7 16q-6 4-13 0z" fill="#f5f5f5"/><circle cx="48" cy="21" r="3.200" fill="#e9e9e9" stroke="#bbb"/><path d="M47 19h2v2h-2zM49 21h2v2h-2z" fill="#888"/><path d="M63 25l1-4L74 9l3 2-10 12z" fill="#2f9a2a" stroke="#333" stroke-width=".8"/><path d="M74 9l2-2 2 2-1 2z" fill="#c33"/>',
  windows: '<path d="M3 5l8-1v7H3zM12 4l10-1v8H12zM3 12h8v7l-8-1zM12 12h10v9l-10-1z" fill="#fff"/>',
  mic: '<g fill="none" stroke="#444" stroke-width="1.300"><rect x="9" y="3" width="6" height="12" rx="2"/><path d="M6 12q0 6 6 6t6-6M12 18v4M8 22h8"/></g>',
  taskview: '<g fill="none" stroke="#fff" stroke-width="1.300"><path d="M4 8h11v9H4zM4 3v2h11V3M4 22v-2h11v2M19 3v18"/></g><rect x="18" y="7" width="3" height="4" fill="#fff"/>',
  illustrator: '<rect x="2" y="3" width="20" height="19" fill="#2b0e02" stroke="#f7841d" stroke-width="1.500"/><text x="12" y="17" text-anchor="middle" font-size="12" font-weight="600" fill="#f7841d" font-family="Open Sans, sans-serif">Ai</text>',
  photoshop: '<rect x="2" y="3" width="20" height="19" fill="#02202e" stroke="#29b6e8" stroke-width="1.500"/><text x="12" y="17" text-anchor="middle" font-size="12" font-weight="600" fill="#29b6e8" font-family="Open Sans, sans-serif">Ps</text>',
  excel: office('#107c41', 'X', '<rect x="6" y="2" width="17" height="20" fill="#21a366"/><path d="M15 2h8v7h-8z" fill="#33c481"/><path d="M6 15h17v7H6z" fill="#185c37"/>'),
  powerpoint: office('#c43e1c', 'P', '<circle cx="13" cy="12" r="10" fill="#ed6c47"/><path d="M13 2a10 10 0 0 1 10 10H13z" fill="#ff8f6b"/>'),
  word: office('#185abd', 'W', '<rect x="6" y="2" width="17" height="20" fill="#2b7cd3"/><path d="M6 2h17v5H6z" fill="#41a5ee"/><path d="M6 16h17v6H6z" fill="#103f91"/>'),
  explorer: '<path d="M1 4h8l2 2h12v16H1z" fill="#f7d774"/><path d="M1 9h22v13H1z" fill="#ffe9a0"/><path d="M5 22v-8h14v8h-4v-4H9v4z" fill="#3a9be0"/>',
  calc: '<rect x="3" y="1" width="18" height="22" fill="#fff"/><path d="M6 4h12v4H6z" fill="#111"/><path d="M6 11h3v2H6zM11 11h3v2h-3zM16 11h3v2h-3zM6 15h3v2H6zM11 15h3v2h-3zM16 15h3v2h-3zM6 19h3v2H6zM11 19h3v2h-3zM16 19h3v2h-3z" fill="#111"/>',
  people: '<g fill="none" stroke="#fff" stroke-width="1.500"><circle cx="9" cy="11" r="3.500"/><path d="M3 22q0-7 6-7t6 7"/><circle cx="16" cy="6" r="3.500"/><path d="M15 11q6-1 7 7"/></g>',
  chevUp: '<path d="M4 16l8-8 8 8" fill="none" stroke="#fff" stroke-width="1.800"/>',
  autodesk: '<path d="M3 21L9 3h6l6 18h-5l-4-12-4 12z" fill="#2b9e8c"/><path d="M3 21L9 3l3 6-4 12z" fill="#2d6fd0"/><circle cx="16" cy="8" r="6" fill="#e86a1a"/><path d="M13 8a3 3 0 1 1 3 3" fill="none" stroke="#fff" stroke-width="1.800"/>',
  eset: '<rect x="2" y="2" width="18" height="18" rx="5" fill="#e9f7f8"/><text x="11" y="16" text-anchor="middle" font-size="16" font-weight="700" fill="#0a8a94" font-family="Open Sans, sans-serif">e</text><path d="M17 12l6 11H11z" fill="#e03024"/>',
  network: '<path d="M3 4h16v11H3zM7 19h8M3 4v16" fill="none" stroke="#fff" stroke-width="1.500"/><circle cx="17" cy="17" r="6" fill="#d32020"/><path d="M14.500 14.500l5 5M19.500 14.500l-5 5" stroke="#fff" stroke-width="1.600"/>',
  volume: '<g fill="none" stroke="#fff" stroke-width="1.400"><path d="M2 9h4l5-5v16l-5-5H2zM14 9q2 3 0 6M17 7q3 5 0 10"/><path d="M20 5q4 7 0 14" stroke="#777"/></g>',
  note: '<path d="M1 2h20v14h-7l-4 4v-4H1z" fill="#fff"/><path d="M4 6h14M4 9h14M4 12h14" stroke="#060b12" stroke-width="1.400"/>',
}

// ---- model ----
// Catmull-Rom through the points
function smooth(p, closed = true) {
  const at = (i) => closed ? p[(i + p.length) % p.length] : p[Math.min(Math.max(i, 0), p.length - 1)]
  let d = `M${p[0]}`
  for (let i = 0; i < p.length - (closed ? 0 : 1); i++) {
    const [a, c, e, f] = [at(i - 1), at(i), at(i + 1), at(i + 2)]
    d += `C${c[0] + (e[0] - a[0]) / 6} ${c[1] + (e[1] - a[1]) / 6} ${e[0] - (f[0] - c[0]) / 6} ${e[1] - (f[1] - c[1]) / 6} ${e[0]} ${e[1]}`
  }
  return closed ? d + 'Z' : d
}

const outer = [[661, 535], [664, 500], [675, 460], [699, 419], [733, 387], [770, 364], [813, 345], [857, 335], [900, 332], [932, 334], [963, 341], [1013, 360], [1050, 383], [1083, 412], [1113, 450], [1131, 489], [1139, 540], [1135, 580], [1124, 618], [1097, 663], [1052, 700], [1028, 711], [1006, 715], [984, 710], [900, 678], [800, 641], [690, 599], [675, 590], [666, 573]]
const inner = [[674, 535], [677, 507], [687, 473], [708, 438], [739, 405], [773, 379], [815, 358], [858, 349], [900, 345], [930, 347], [960, 353], [1005, 371], [1042, 394], [1072, 420], [1100, 455], [1118, 493], [1126, 540], [1123, 573], [1113, 606], [1088, 645], [1047, 684], [1023, 696], [1006, 701], [990, 699], [903, 665], [803, 628], [699, 589], [685, 579], [678, 565]]
const between = (t) => outer.map(([px, py], i) => [px + (inner[i][0] - px) * t, py + (inner[i][1] - py) * t])
const rings = [[0, 2], [0.14, 2], [0.28, 1.4], [1, 2.6]].map(([t, w]) => ({ t, w, d: smooth(between(t)) }))
const arcs = [0.4, 0.5, 0.6, 0.72, 0.84].map((t) => smooth(between(t).slice(3, 15), false))

const flange = [
  'M767 363L752 350V343Q819 310 900 311Q916 311 930 313L969 325L966 333L962 343',
  'M753 350Q823 318 900 319L930 322L966 333M752 343L770 362M930 313V322',
  'M754 346Q821 313 900 314L930 316L967 328',
  'M1004 360L1012 339L1050 351Q1082 370 1122 408Q1155 446 1169 480L1167 487L1137 490M1135 483L1169 480',
  'M1006 358L1009 345L1050 359Q1080 376 1119 413Q1151 448 1161 481M1050 351V359',
  'M1050 354Q1081 372 1120 410Q1151 444 1165 480',
  'M734 389L714 365L670 406Q645 440 629 470Q619 495 615 519L617 526L652 523M615 519L653 517V562L614 567',
  'M730 390L715 370L672 411Q648 445 632 473Q624 492 619 519M714 365V371',
  'M652 557L613 560Q615 588 623 607Q627 615 638 619L1013 763Q1029 768 1044 759L1080 738L1053 711L1092 677L1119 710L1155 658Q1170 618 1182 583Q1185 560 1182 519L1143 522',
  'M613 560L616 588Q620 610 627 617L638 624L1010 766Q1029 771 1046 762L1082 740L1079 734L1056 711L1092 682L1117 706',
  'M1145 528L1179 525Q1182 560 1179 583M1137 490L1143 522L1145 530',
  'M1119 710L1153 658Q1168 618 1180 583',
]
const seams = [
  'M838 316V324M670 411L700 422M673 406L703 416M629 470L634 480M833 640L819 688M837 642L823 684M819 684V690M637 618V624M1013 760V767',
  'M1124 569L1180 591M1124 560L1181 583M634 519V526M634 559V565M950 319V327M1031 345V353M1120 408V414M1151 481V487M1161 520V527M1030 768L1031 764M1104 690V696M1068 724V730',
  'M735 388L765 366M740 391L770 369M964 344L1006 361M963 349L1004 366',
]
const screen = [
  'M774 449L970 515L994 534L1057 553L1069 577L1036 666L1000 678L704 569L693 540L742 459Z',
  'M774 458L970 523L994 543L1055 563L1065 582L1034 663L1000 674L705 567L698 545L744 467Z',
  'M774 449V458M742 459L744 467M970 515V523M994 534V543M1057 553V563M758 454V463M871 481V490M1026 544V552',
]
const holes = [[826, 415, 35, 23], [919, 446, 36, 24], [1033, 485, 46, 33]]

const big = [
  [858, 356], [878, 363], [839, 367], [862, 374], [882, 381], [800, 371], [782, 383], [762, 395], [762, 412], [745, 424], [724, 436], [766, 432], [746, 445], [726, 456], [700, 467], [702, 488], [687, 522], [787, 439], [808, 447], [830, 454], [849, 442], [868, 430], [871, 449], [852, 462], [873, 469], [895, 477], [885, 399],
  [897, 352], [918, 359], [939, 365], [960, 371], [981, 379], [1003, 386], [1025, 393], [899, 370], [921, 377], [942, 383], [963, 390], [985, 397], [1007, 404], [1029, 411], [1051, 418], [902, 388], [924, 395], [945, 401], [967, 409], [989, 416], [1011, 423], [1033, 430], [971, 428], [993, 435], [974, 447], [1071, 443],
  [1094, 460], [1097, 479], [1103, 499], [1084, 511], [1108, 520], [1066, 524], [1089, 532], [1113, 540], [1024, 530], [1047, 537], [986, 507], [963, 499], [959, 479], [940, 492], [917, 484], [1071, 546], [1094, 554],
  [716, 582], [738, 591], [761, 599], [784, 608], [807, 617], [832, 626], [855, 634], [879, 643], [903, 652], [928, 661], [952, 670], [977, 680], [1054, 655], [1089, 614], [1080, 590], [1104, 577],
]
const small = [
  [822, 361], [819, 374], [780, 400], [780, 419], [744, 407], [726, 419], [708, 450], [718, 474], [686, 502], [701, 507], [683, 541], [866, 393], [876, 414], [956, 357], [977, 363], [997, 371], [1043, 399], [1069, 425], [1052, 437], [902, 406], [959, 461], [975, 465], [978, 486], [1004, 523], [939, 474],
  [687, 558], [693, 573], [1115, 561], [1084, 570], [1101, 597], [1068, 607], [1071, 623], [1056, 635], [1074, 640], [1039, 672], [1022, 681], [1003, 688],
]
const gem = (kind, rx, ry) => ([gx, gy]) => ({
  kind,
  x: gx,
  y: gy,
  rx,
  ry: kind === 'dark' && gy > 570 ? ry + 1 : ry,
  prongs: [20, 75, 130, 165, 200, 255, 310, 345].map((a) => [gx + Math.cos(a * Math.PI / 180) * (rx + 1), gy + Math.sin(a * Math.PI / 180) * (ry + 1)]),
})
const gems = [...big.map(gem('dark', 10.6, 8)), ...small.map(gem('light', 7.6, 6.2))]
</script>

<style>
body {
  background: #e9ecf0;
}
</style>

<style scoped>
.app {
  position: relative;
  display: flex;
  flex-direction: column;
  min-height: 100vh;
  overflow: hidden;
  background: #e9ecf0;
  color: #1c1c1c;
  font-family: Roboto, "Open Sans", sans-serif;
  font-size: 12px;
  line-height: 15px;
}
.app * { box-sizing: border-box; }
.defs { position: absolute; }
button {
  padding: 0;
  border: 0;
  background: none;
  color: inherit;
  font: inherit;
}
p, h1, h2, h3 { margin: 0; font-size: 12px; font-weight: 400; }
svg { display: block; flex: none; }
input { font: inherit; color: inherit; }

.titlebar {
  display: flex;
  align-items: center;
  height: 22px;
  background: #fff;
}
.logo { width: 18px; height: 20px; margin: 0 3px 0 2px; }
.titlebar h1 { flex: 1; color: #000; }
.window-buttons { display: flex; }
.window-buttons button { display: grid; place-items: center; width: 46px; height: 20px; }
.window-buttons svg { width: 12px; height: 12px; fill: none; stroke: #111; stroke-width: 1; }

.menubar {
  display: flex;
  gap: 13px;
  height: 22px;
  padding-left: 7px;
  background: #fff;
  color: #000;
}

.command {
  display: grid;
  grid-template-columns: 1fr 16px;
  grid-template-rows: 46px 17px;
  margin-left: 6px;
  padding-bottom: 1px;
  border-left: 1px solid #c3cbdf;
  border-bottom: 1px solid #c3cbdf;
  color: #111;
}
.history { border-bottom: 1px solid #b4bdd2; background: #fff; }
.history p { padding-left: 1px; }
.history-scroll { display: flex; flex-direction: column; justify-content: space-between; align-items: center; padding: 8px 0; background: #f0f0f0; }
.history-scroll svg { width: 8px; height: 5px; fill: none; stroke: #444; stroke-width: 1.500; }
.prompt { display: flex; align-items: center; gap: 4px; padding-left: 1px; background: #fff; }
.prompt label { font-weight: 700; }
.prompt input { flex: 1; min-width: 0; border: 0; outline: 0; padding: 0; background: none; }
.caret { width: 1px; height: 14px; background: #000; }
.spin { display: grid; padding: 1px; }
.spin button, .steps button { display: grid; place-items: center; border: 1px solid #aab2c4; background: #f6f6f6; }
.spin svg, .steps svg { width: 6px; height: 3px; fill: #222; }

.toolbar { display: flex; height: 40px; align-items: center; padding-left: 6px; }
.toolbar.subd { height: 31px; border-top: 1px solid #b9c5df; }
.tool { position: relative; display: grid; place-items: center; flex: none; width: 28px; height: 28px; }
.tool svg { width: 22px; height: 22px; }
.more::after {
  content: "";
  position: absolute;
  right: 0;
  bottom: 1px;
  border: 3px solid transparent;
  border-right-color: #444;
  border-bottom-color: #444;
}
.subd .tool svg { width: 23px; height: 22px; }
.sep { flex: none; width: 1px; height: 24px; margin: 0 3px 0 2px; background: #b5bcc9; }
.overflow { flex: none; margin-left: 16px; font-size: 16px; font-weight: 500; }

.tabs {
  display: flex;
  align-items: flex-end;
  height: 21px;
  padding-left: 7px;
  border-top: 1px solid #ccd4e6;
  color: #3a3a3a;
}
.tabs button { height: 18px; padding: 0 9px; border: 1px solid transparent; border-bottom: 0; }
.tabs button.active { border-color: #b9c5df; border-radius: 6px 2px 0 0; padding: 0 11px 0 8px; }
.tabs .gear { margin-left: auto; margin-right: 1px; width: 16px; height: 18px; }

.workspace { display: flex; flex: 1; padding-top: 7px; }

.layers { display: flex; flex-direction: column; width: 193px; flex: none; padding: 8px 0 0 1px; border-top: 1px solid #b9c5df; border-right: 1px solid #b9c5df; }
.panel-tab { display: flex; height: 21px; }
.panel-label { display: flex; align-items: center; gap: 3px; width: 58px; padding-left: 4px; border: 1px solid #b9c5df; border-width: 1px 0 0 1px; border-top-left-radius: 5px; color: #333; }
.panel-label svg { width: 16px; height: 17px; flex: none; }
.slant { width: 22px; height: 21px; fill: none; stroke: #b9c5df; }
.panel-tab .gear { width: 15px; height: 15px; margin: 3px 0 0 auto; opacity: .6; }
.layer-frame { display: flex; flex: 1; flex-direction: column; border: 1px solid #b9c5df; border-top: 0; }
.layer-tools { display: flex; height: 34px; align-items: center; gap: 7px; padding-left: 8px; overflow: hidden; }
.layer-tools svg { width: 16px; height: 16px; }
.layer-list { flex: 1; background: #fff; border-top: 1px solid #c6cedd; overflow: hidden; }
table { width: 189px; table-layout: fixed; border-collapse: collapse; }
.c-name { width: 97px; }
.c-cur { width: 28px; }
.c-s { width: 17px; }
.c-m { width: 13px; }
th { height: 23px; padding: 0 5px; border-right: 1px solid #dde1ea; font-weight: 400; text-align: left; overflow: hidden; }
th:nth-child(n+3) { padding: 0 0 0 3px; }
td { height: 19px; padding: 0; color: #222; border-bottom: 1px solid #eceef3; }
td:first-child { padding-left: 8px; white-space: nowrap; }
td svg { width: 13px; height: 13px; margin: 0 auto; }
.current td { border-color: #849bec; background: #849bec; }
.current td:first-child { font-weight: 700; }
.swatch { display: block; width: 12px; height: 12px; margin: 0 auto; border: 1px solid #333; }
.current .swatch { border-color: #fff; }
.material { display: block; width: 12px; height: 14px; margin-left: 2px; border-radius: 8px 0 0 8px; background: #fff; }
.hscroll { display: flex; align-items: center; height: 16px; padding: 0 5px; background: #f0f0f0; }
.hscroll .thumb { width: 68px; height: 15px; margin: 0 auto 0 6px; background: #cdcdcd; }
.hscroll svg { width: 6px; height: 9px; fill: none; stroke: #444; stroke-width: 1.500; }

.rendering { display: flex; flex-direction: column; width: 188px; flex: none; padding: 3px 3px 0 8px; border-left: 1px solid #d3d9e6; margin-left: 3px; }
.rendering h2 { height: 18px; color: #333; }
.render-tabs { display: flex; height: 20px; }
.render-tabs button { display: grid; place-items: center; width: 32px; height: 20px; border: 1px solid transparent; border-bottom: 0; padding-top: 2px; }
.render-tabs button:first-child { width: 28px; margin-right: -3px; margin-left: -4px; }
.render-tabs button.active { border-color: #b9c5df; margin-left: 3px; }
.render-tabs button svg { width: 15px; height: 15px; }
.render-tabs .gear { width: 14px; height: 14px; margin: 4px 0 0 10px; opacity: .6; }
.render-frame { display: flex; flex: 1; flex-direction: column; width: 180px; margin-left: -4px; border: 1px solid #b9c5df; }
.render-scroll { display: flex; flex: 1; border-bottom: 1px solid #d0d7e5; overflow: hidden; }
.render-body { display: flex; flex-direction: column; width: 161px; height: 562px; overflow: hidden; color: #333; }
.quality { display: flex; justify-content: flex-end; gap: 6px; padding-right: 6px; height: 20px; flex: none; margin-bottom: 8px; }
.select { position: relative; display: block; width: 87px; height: 20px; border: 1px solid #b9c5df; border-top: 0; }
.select select { width: 100%; height: 18px; padding: 0 0 2px 3px; border: 0; appearance: none; background: none; color: inherit; font: inherit; }
.select .chev { position: absolute; right: 3px; top: 6px; }
.chev { width: 9px; height: 6px; fill: none; stroke: #555; stroke-width: 1.200; }
h3 { display: flex; align-items: center; gap: 7px; flex: none; height: 24px; margin: 7px 6px 8px 7px; font-size: 13px; }
.env + h3 { margin-top: 16px; }
h3 svg { width: 9px; height: 6px; fill: none; stroke: #333; stroke-width: 1.800; }
h3 i { flex: 1; height: 1px; background: #333; margin-left: -3px; }
.field { display: flex; align-items: center; flex: none; height: 25px; padding-left: 28px; white-space: nowrap; }
.field.spaced { margin-top: 8px; }
.field.spaced-2 { margin-top: 16px; }
.field label, .osnap label { display: flex; align-items: center; gap: 4px; }
input[type="radio"], input[type="checkbox"] {
  position: relative;
  appearance: none;
  flex: none;
  width: 13px;
  height: 13px;
  margin: 0;
  border: 1px solid #333;
  background: #fff;
}
input[type="radio"] { border-radius: 50%; }
input[type="radio"]:checked::after { content: ""; position: absolute; inset: 2px; border-radius: 50%; background: #444; }
input[type="checkbox"]:checked::after {
  content: "";
  position: absolute;
  left: 3px;
  top: 0;
  width: 5px;
  height: 9px;
  border: solid #333;
  border-width: 0 1px 1px 0;
  transform: rotate(42deg);
}
input[type="checkbox"]:disabled { border-color: #bcbcbc; background: #dcdcdc; }
.solid-swatch { width: 17px; height: 24px; margin: 0 12px 0 auto; background: #a2a2a4; border: 1px solid #b4b8c2; }
.mini { display: grid; place-items: center; width: 20px; height: 28px; margin: 0 8px 0 auto; border: 1px solid #b9c5df; }
.mini svg { width: 17px; height: 17px; }
.env { display: flex; align-items: center; flex: none; width: 104px; height: 38px; margin: 1px 0 1px 46px; padding-left: 2px; border: 1px solid #b9c5df; background: #fff; }
.env.reflect { margin-top: 4px; }
.env .scene { width: 77px; height: 34px; overflow: visible; }
.env .chev { margin-left: 6px; }
.env.off { background: #f4f5f7; }
.env.off .scene { filter: grayscale(1); opacity: .8; }
.env.off .chev { opacity: .4; }
.intensity { margin-top: 13px; }
.intensity .cut { width: 8px; border-right: 0; margin-right: 9px; overflow: hidden; }
.number { display: flex; width: 50px; height: 23px; margin-left: 4px; border: 1px solid #b9c5df; background: #fff; }
.number input { flex: 1; min-width: 0; padding: 0 0 0 5px; border: 0; background: none; }
.steps { display: grid; width: 13px; }
.field.indent { padding-left: 44px; }
.ambient { display: flex; align-items: center; flex: none; height: 26px; margin-top: 8px; padding-left: 26px; white-space: nowrap; }
.lights { display: flex; align-items: center; gap: 7px; width: 44px; height: 26px; padding-left: 3px; border: 1px solid #b9c5df; overflow: hidden; }
.lights svg { width: 15px; height: 15px; }
.black { display: flex; align-items: center; width: 38px; height: 26px; margin: 0 8px 0 auto; border: 1px solid #8f9bb8; }
.black i { width: 23px; height: 24px; margin-right: 3px; background: #000; }
.black .chev { width: 8px; }
.vscroll { display: flex; flex-direction: column; align-items: center; width: 17px; padding: 6px 0; background: #f0f0f0; }
.vscroll svg { width: 9px; height: 6px; fill: none; stroke: #333; stroke-width: 1.600; }
.vscroll .thumb { width: 15px; height: 169px; margin: 99px 0 auto; background: #cdcdcd; }
.render-foot { display: flex; gap: 3px; height: 43px; padding: 5px 4px 3px 0; }
.render-foot button { display: flex; align-items: center; border: 1px solid #b9c5df; }
.render-foot .defaults { width: 68px; border-left: 0; overflow: hidden; }
.defaults span { margin-left: -4px; white-space: nowrap; }
.go { flex: 1; padding-left: 2px; }
.go svg { width: 25px; height: 25px; }
.go span { flex: 1; text-align: center; padding-left: 6px; }

.toolbox { display: grid; grid-template-columns: 28px 28px; align-content: start; width: 63px; flex: none; margin-left: 2px; padding-top: 8px; border-left: 1px solid #c3cbdf; }

.view { display: flex; flex: 1; flex-direction: column; min-width: 0; }
.canvas { position: relative; flex: 1; border: 1px solid #b9c5df; border-right-color: #dfe3ea; background: #9da3aa; overflow: hidden; }
.model { position: absolute; inset: 0; width: 100%; height: 100%; }
.view-name { position: absolute; left: 0; top: 0; display: flex; align-items: center; height: 18px; padding-left: 8px; background: #849bf0; color: #141c50; font-weight: 700; }
.view-name i { display: grid; place-items: center; width: 11px; height: 14px; margin-left: 6px; border-left: 1px solid #33448c; }
.view-name svg { width: 7px; height: 5px; fill: #111; }
.view-tabs { display: flex; height: 18px; }
.view-tabs button { padding: 0 8px; height: 20px; }
.view-tabs button.active { border: 1px solid #b9c5df; border-top: 0; border-radius: 0 0 3px 6px; padding: 0 4px 0 9px; }
.view-tabs button:nth-child(n+3) { padding-left: 7px; }
.view-tabs svg { width: 9px; height: 9px; fill: none; stroke: #777; }

.wire { fill: none; stroke: #17248c; stroke-width: 1.600; }
.thin { stroke-width: .8; }
.wire .pad { fill: #202c90; stroke: none; }
.wire .glass { fill: #9da3aa; }
.prongs { fill: #1a2790; }
.hole { fill: #9da3aa; stroke: #17248c; stroke-width: 1.600; }
.hole .line { fill: none; }
.dark { fill: #820406; stroke: #820406; stroke-width: 1.500; stroke-dasharray: 1.200 .7; }
.light { fill: #d14c4a; stroke: #d14c4a; stroke-width: 1.500; stroke-dasharray: 1.200 .7; }
.dark .facet { fill: none; stroke: #9a3034; stroke-width: .7; stroke-dasharray: 1 3; }
.light .facet { stroke: none; }
.axes { fill: none; stroke: #4c5157; stroke-width: 1; }
.axes text { stroke: none; fill: #4c5157; font-size: 12px; }

.osnap { display: flex; gap: 7px; height: 42px; padding: 12px 0 0 9px; align-items: flex-start; }
.osnap label { gap: 3px; height: 15px; }
.osnap .wide { gap: 4px; margin-right: 7px; }

.status {
  display: grid;
  grid-template-columns: 49px 89px 88px 88px 88px 168px 65px 46px 47px 47px 75px 58px 93px 39px 1fr;
  height: 20px;
  border-top: 1px solid #b9c5df;
  text-align: center;
  line-height: 19px;
  white-space: nowrap;
}
.status > * { border-right: 1px solid #c3cbdf; }
.status .layer-name { display: flex; align-items: center; gap: 2px; padding-left: 3px; }
.layer-name i { width: 14px; height: 14px; background: #152290; border: 1px solid #333; }
.status .on { background: #d3daf2; font-weight: 700; }

.taskbar { display: flex; height: 40px; background: #060b12; color: #fff; }
.start { display: grid; place-items: center; width: 48px; }
.start svg { width: 19px; height: 19px; }
.search { display: flex; align-items: center; width: 344px; padding: 0 12px 0 9px; background: #f0f0f0; color: #333; }
.search input { flex: 1; min-width: 0; margin-left: 10px; padding: 0; border: 0; background: none; font-family: "Open Sans", sans-serif; font-size: 14px; }
.search input::placeholder { color: #333; opacity: 1; }
.search svg { width: 18px; height: 18px; }
.cortana { width: 21px; height: 21px; border: 3px solid #111; border-radius: 50%; }
.app-button { display: grid; place-items: center; width: 49px; border: 0; }
.app-button svg { width: 24px; height: 24px; }
.app-button.open { box-shadow: inset 0 -2px #76b9ed; }
.app-button.active { background: #45484e; }
.tray { display: flex; align-items: center; margin-left: auto; padding-right: 14px; gap: 8px; }
.tray svg { width: 16px; height: 16px; }
.tray .people { margin-right: 12px; }
.lang { margin-left: 4px; }
.clock { display: flex; flex-direction: column; align-items: center; width: 66px; margin-left: 2px; line-height: 18px; }
.notes { position: relative; width: 30px; height: 20px; margin-left: 5px; }
.notes svg { width: 20px; height: 20px; }
.notes b { position: absolute; right: 3px; bottom: -6px; width: 16px; height: 16px; border: 1px solid #aaa; border-radius: 50%; background: #333; font-size: 11px; line-height: 14px; text-align: center; }

.watermark { position: absolute; right: 50px; bottom: 82px; width: 276px; height: 37px; overflow: hidden; color: #a9abae; font-family: "Open Sans", sans-serif; white-space: nowrap; pointer-events: none; }
.watermark p:first-child { margin-top: -10px; font-size: 19px; line-height: 24px; }
.watermark p:last-child { font-size: 14px; line-height: 20px; }
</style>
